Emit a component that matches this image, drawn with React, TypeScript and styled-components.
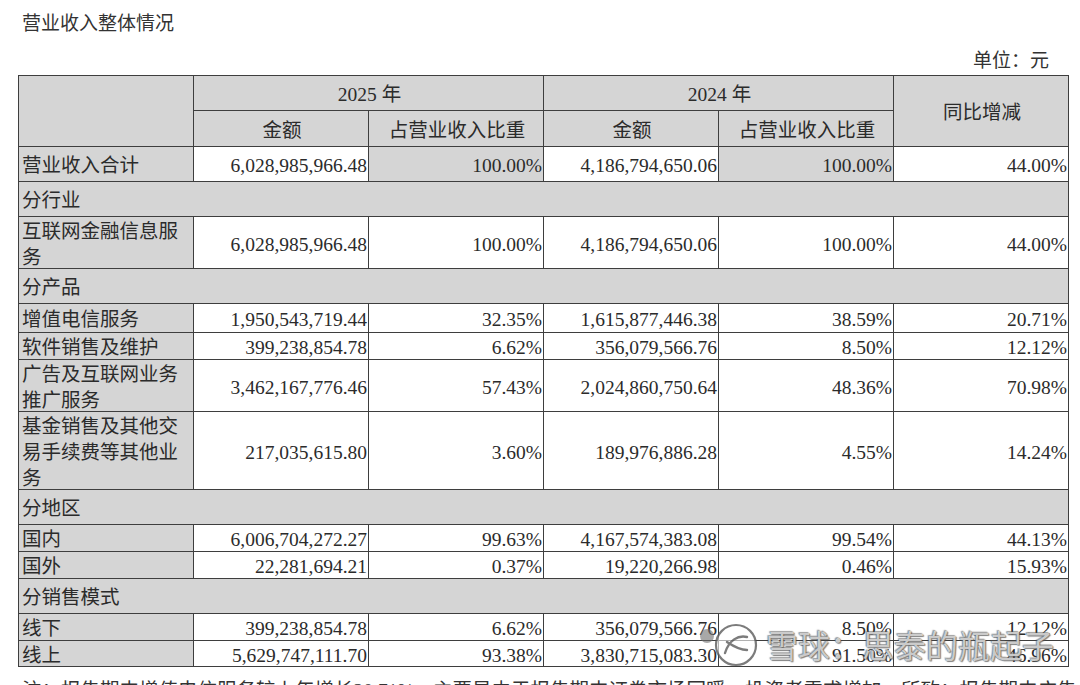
import React from 'react';
import styled, { createGlobalStyle } from 'styled-components';

const GlobalStyle = createGlobalStyle`
  html, body { margin: 0; padding: 0; background: #fff; overflow: hidden; }
  body {
    font-family: "Liberation Serif", "Noto Sans CJK SC", serif;
    color: #2b2b2b;
  }
`;

const Page = styled.div`
  position: relative;
  width: 1080px;
  height: 685px;
  overflow: hidden;
  box-sizing: border-box;
  padding: 11px 0 0 18px;
`;

const Title = styled.div`
  font-size: 19px;
  line-height: 26px;
  padding-left: 4px;
  color: #333;
`;

const Unit = styled.div`
  width: 1051px;
  box-sizing: border-box;
  margin-top: 11px;
  padding-right: 20px;
  text-align: right;
  font-size: 19px;
  line-height: 26px;
  color: #333;
`;

const Grid = styled.div<{ $rows: string }>`
  display: grid;
  width: 1051px;
  box-sizing: border-box;
  margin-top: 1px;
  grid-template-columns: repeat(6, 174px);
  grid-template-rows: ${(p) => p.$rows};
  gap: 1px;
  padding: 1px;
  background: #3e3e3e;
`;

type Align = 'left' | 'right' | 'center';

const Cell = styled.div<{ $gray?: boolean; $align?: Align; $col?: string; $row?: string }>`
  display: flex;
  align-items: center;
  justify-content: ${(p) => (p.$align === 'right' ? 'flex-end' : p.$align === 'center' ? 'center' : 'flex-start')};
  text-align: ${(p) => p.$align || 'left'};
  background: ${(p) => (p.$gray ? '#d5d5d5' : '#fff')};
  ${(p) => (p.$col ? `grid-column: ${p.$col};` : '')}
  ${(p) => (p.$row ? `grid-row: ${p.$row};` : '')}
  padding: 4px 1px 0 3px;
  font-size: 19.5px;
  line-height: 26px;
  color: #2b2b2b;
  min-height: 0;
`;

const Note = styled.div`
  margin-top: 11px;
  padding-left: 4px;
  white-space: nowrap;
  font-size: 19.5px;
  line-height: 26px;
  color: #333;
`;

const Watermark = styled.div`
  position: absolute;
  left: 698px;
  top: 619px;
  display: flex;
  align-items: center;
  gap: 4px;
  pointer-events: none;
`;

const WatermarkText = styled.span`
  font-family: "Noto Sans CJK SC", sans-serif;
  font-size: 32px;
  line-height: 46px;
  color: rgba(255, 255, 255, 0.72);
  text-shadow: 0 0 1px rgba(60, 60, 60, 0.95), 1px 1px 1px rgba(90, 90, 90, 0.7), -1px -1px 1px rgba(90, 90, 90, 0.5);
`;

type DataRow = {
  kind: 'data';
  label: string;
  h: number;
  v: [string, string, string, string, string];
  grayRatio?: boolean;
};
type SectionRow = { kind: 'section'; label: string; h: number };
type Row = DataRow | SectionRow;

const rows: Row[] = [
  { kind: 'data', label: '营业收入合计', h: 34, v: ['6,028,985,966.48', '100.00%', '4,186,794,650.06', '100.00%', '44.00%'], grayRatio: true },
  { kind: 'section', label: '分行业', h: 34 },
  { kind: 'data', label: '互联网金融信息服务', h: 51, v: ['6,028,985,966.48', '100.00%', '4,186,794,650.06', '100.00%', '44.00%'] },
  { kind: 'section', label: '分产品', h: 34 },
  { kind: 'data', label: '增值电信服务', h: 28, v: ['1,950,543,719.44', '32.35%', '1,615,877,446.38', '38.59%', '20.71%'] },
  { kind: 'data', label: '软件销售及维护', h: 26, v: ['399,238,854.78', '6.62%', '356,079,566.76', '8.50%', '12.12%'] },
  { kind: 'data', label: '广告及互联网业务推广服务', h: 51, v: ['3,462,167,776.46', '57.43%', '2,024,860,750.64', '48.36%', '70.98%'] },
  { kind: 'data', label: '基金销售及其他交易手续费等其他业务', h: 77, v: ['217,035,615.80', '3.60%', '189,976,886.28', '4.55%', '14.24%'] },
  { kind: 'section', label: '分地区', h: 34 },
  { kind: 'data', label: '国内', h: 26, v: ['6,006,704,272.27', '99.63%', '4,167,574,383.08', '99.54%', '44.13%'] },
  { kind: 'data', label: '国外', h: 26, v: ['22,281,694.21', '0.37%', '19,220,266.98', '0.46%', '15.93%'] },
  { kind: 'section', label: '分销售模式', h: 34 },
  { kind: 'data', label: '线下', h: 26, v: ['399,238,854.78', '6.62%', '356,079,566.76', '8.50%', '12.12%'] },
  { kind: 'data', label: '线上', h: 25, v: ['5,629,747,111.70', '93.38%', '3,830,715,083.30', '91.50%', '46.96%'] },
];

const XueqiuLogo = () => (
  <svg width="64" height="50" viewBox="0 0 64 50" aria-hidden>
    <circle cx="9" cy="17" r="7" fill="rgba(110,110,110,0.6)" />
    <circle cx="38" cy="26" r="20" fill="rgba(255,255,255,0.6)" stroke="rgba(80,80,80,0.75)" strokeWidth="2.2" />
    <path d="M27 34 C31 21, 40 16, 49 18 M29 23 C35 27, 42 31, 49 31" fill="none" stroke="rgba(80,80,80,0.75)" strokeWidth="2.4" strokeLinecap="round" />
  </svg>
);

export default function App() {
  const template = ['34px', '35px', ...rows.map((r) => `${r.h}px`)].join(' ');
  return (
    <>
      <GlobalStyle />
      <Page>
        <Title>营业收入整体情况</Title>
        <Unit>单位：元</Unit>
        <Grid $rows={template}>
          <Cell $gray $col="1" $row="1 / 3" />
          <Cell $gray $align="center" $col="2 / 4" $row="1">2025 年</Cell>
          <Cell $gray $align="center" $col="4 / 6" $row="1">2024 年</Cell>
          <Cell $gray $align="center" $col="6" $row="1 / 3">同比增减</Cell>
          <Cell $gray $align="center" $col="2" $row="2">金额</Cell>
          <Cell $gray $align="center" $col="3" $row="2">占营业收入比重</Cell>
          <Cell $gray $align="center" $col="4" $row="2">金额</Cell>
          <Cell $gray $align="center" $col="5" $row="2">占营业收入比重</Cell>
          {rows.map((r, i) =>
            r.kind === 'section' ? (
              <Cell key={i} $gray $col="1 / -1">{r.label}</Cell>
            ) : (
              <React.Fragment key={i}>
                <Cell $gray>{r.label}</Cell>
                {r.v.map((val, j) => (
                  <Cell key={j} $align="right" $gray={!!r.grayRatio && (j === 1 || j === 3)}>
                    {val}
                  </Cell>
                ))}
              </React.Fragment>
            )
          )}
        </Grid>
        <Note>注：报告期内增值电信服务较上年增长20.71%，主要是由于报告期内证券市场回暖，投资者需求增加，所致；报告期内广告</Note>
        <Watermark>
          <XueqiuLogo />
          <WatermarkText>雪球：思泰的瓶起子</WatermarkText>
        </Watermark>
      </Page>
    </>
  );
}
